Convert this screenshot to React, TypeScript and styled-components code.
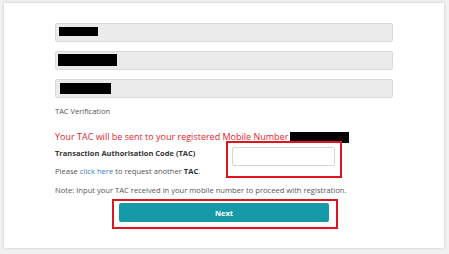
import React from "react";
import styled, { createGlobalStyle } from "styled-components";

const Global = createGlobalStyle`
html, body {
  margin: 0;
  padding: 0;
  background: #f2f2f2;
  font-family: "Open Sans", "Noto Sans", sans-serif;
}
`

const Page = styled.div`
width: 449px;
height: 254px;
padding: 3px 5px 6px 4px;
box-sizing: border-box;
`

const Card = styled.div`
background: #ffffff;
height: 100%;
box-shadow: 0 0 3px rgba(0, 0, 0, 0.18);
padding: 20px 51px 0 51px;
box-sizing: border-box;
display: flex;
flex-direction: column;
`

const Fields = styled.div`
display: flex;
flex-direction: column;
gap: 9px;
`

const Field = styled.div`
height: 19px;
background: #ebebeb;
border: 1px solid #d9d9d9;
border-radius: 2px;
box-sizing: border-box;
position: relative;
`

const Redact = styled.span<{ $w: number; $h: number; $l: number; $t: number }>`
position: absolute;
left: ${p => p.$l}px;
top: ${p => p.$t}px;
width: ${p => p.$w}px;
height: ${p => p.$h}px;
background: #000;
`

const Caption = styled.div`
font-size: 7.5px;
color: #555;
margin-top: 8px;
line-height: 10px;
`

const Warning = styled.div`
font-size: 9px;
color: #e3232b;
margin-top: 15px;
line-height: 12px;
display: flex;
align-items: center;
`

const InlineRedact = styled.span`
display: inline-block;
width: 59px;
height: 11px;
background: #000;
margin-left: 2px;
`

const TacRow = styled.div`
display: grid;
grid-template-columns: 177px 103px;
align-items: start;
margin-top: 4px;
`

const Label = styled.label`
font-size: 7.5px;
font-weight: 700;
color: #333;
line-height: 10px;
margin-top: 1px;
`

const Highlight = styled.div`
position: relative;
&::after {
  content: "";
  position: absolute;
  left: ${(p: { $l: number; $t: number; $r: number; $b: number }) => -p.$l}px;
  top: ${p => -p.$t}px;
  right: ${p => -p.$r}px;
  bottom: ${p => -p.$b}px;
  border: 2.5px solid #e0141e;
  pointer-events: none;
}
`

const Input = styled.input`
display: block;
width: 103px;
height: 19px;
box-sizing: border-box;
border: 1px solid #d6d6d6;
border-radius: 2px;
background: #fff;
padding: 0 4px;
`

const Text = styled.div`
font-size: 7.6px;
color: #555;
line-height: 10px;
margin-top: 0;
`

const Note = styled(Text)`
margin-top: 9px;
`

const A = styled.a`
color: #3a7ac4;
text-decoration: none;
`

const B = styled.b`
color: #333;
`

const ButtonWrap = styled.div`
display: flex;
justify-content: center;
margin-top: 8px;
`

const Button = styled.button`
display: block;
width: 210px;
height: 19px;
border: none;
border-radius: 2px;
background: #169aa7;
color: #fff;
font-family: inherit;
font-size: 7.5px;
font-weight: 700;
`

export default function App() {
  return (
    <Page>
      <Global />
      <Card>
        <Fields>
          <Field><Redact $l={3} $t={3} $w={39} $h={9} /></Field>
          <Field><Redact $l={2} $t={2} $w={59} $h={12} /></Field>
          <Field><Redact $l={4} $t={3} $w={51} $h={11} /></Field>
        </Fields>
        <Caption>TAC Verification</Caption>
        <Warning>Your TAC will be sent to your registered Mobile Number<InlineRedact /></Warning>
        <TacRow>
          <Label>Transaction Authorisation Code (TAC)</Label>
          <Highlight $l={6} $t={6} $r={7} $b={12}>
            <Input />
          </Highlight>
        </TacRow>
        <Text>Please <A href="#">click here</A> to request another <B>TAC</B>.</Text>
        <Note>Note: Input your TAC received in your mobile number to proceed with registration.</Note>
        <ButtonWrap>
          <Highlight $l={7} $t={4} $r={9} $b={7}>
            <Button>Next</Button>
          </Highlight>
        </ButtonWrap>
      </Card>
    </Page>
  );
}
